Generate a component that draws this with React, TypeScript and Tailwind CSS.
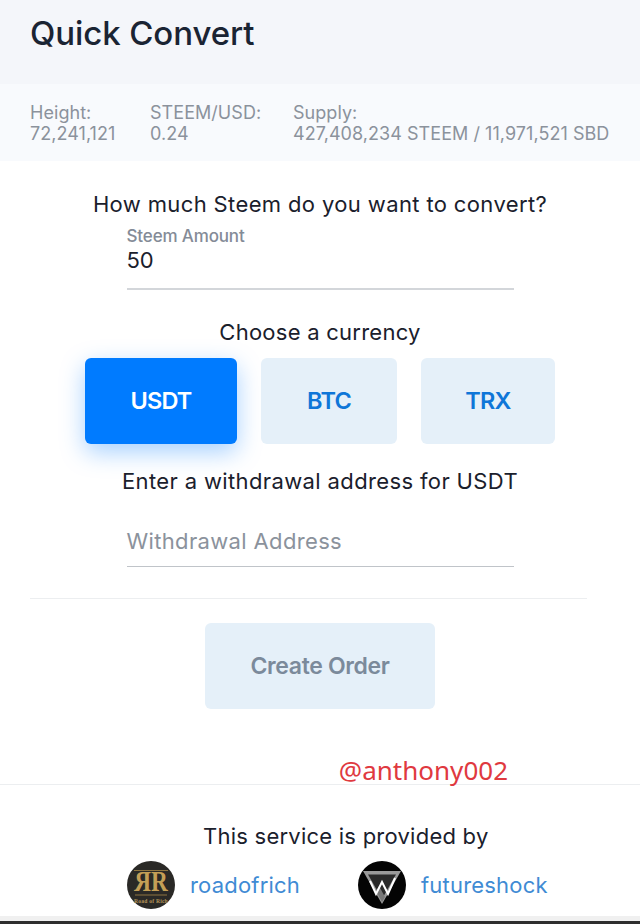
import React from 'react';

const stats = [
  { label: 'Height:', value: '72,241,121' },
  { label: 'STEEM/USD:', value: '0.24' },
  { label: 'Supply:', value: '427,408,234 STEEM / 11,971,521 SBD' },
];

const RoadOfRichLogo = () => (
  <svg viewBox="0 0 48 48" className="w-[48px] h-[48px] shrink-0">
    <circle cx="24" cy="24" r="24" fill="#2a2926" />
    <path d="M7 9.5H41" stroke="#8d7440" strokeWidth="1" />
    <text fontSize="29" fontWeight="700" fontFamily="Liberation Serif" fill="#c49f56" textAnchor="middle" transform="matrix(-0.8 0 0 1 15.5 30)">R</text>
    <text fontSize="29" fontWeight="700" fontFamily="Liberation Serif" fill="#c49f56" textAnchor="middle" transform="matrix(0.8 0 0 1 32.5 30)">R</text>
    <path d="M8 34H40" stroke="#8d7440" strokeWidth="1" />
    <text x="24" y="41.5" fontSize="5.6" fontWeight="700" fontFamily="Liberation Serif" fill="#b4945a" textAnchor="middle">Road of Rich</text>
  </svg>
);

const FutureshockLogo = () => (
  <svg viewBox="0 0 48 48" className="w-[48px] h-[48px] shrink-0">
    <circle cx="24" cy="24" r="24" fill="#040404" />
    <path d="M5 10H43L24 43Z" fill="#9a9a9a" />
    <path d="M10 13.5H38L24 38Z" fill="#2a2a2a" />
    <path d="M21 25L27 36L24 41L18 30Z" fill="#777777" />
    <path d="M12 20L18 33L24 21L30 33L37 17" fill="none" stroke="#ffffff" strokeWidth="2" />
  </svg>
);

const CurrencyButton = ({ label, active, className }: { label: string; active?: boolean; className: string }) => (
  <button
    className={`h-[86px] rounded-[6px] text-[23.5px] font-semibold tracking-[-0.8px] ${className} ${
      active
        ? 'bg-[#007bff] text-white shadow-[0_8px_24px_rgba(0,123,255,0.35)]'
        : 'bg-[#e5f0f9] text-[#0f76d8]'
    }`}
  >
    {label}
  </button>
);

export default function App() {
  return (
    <div className="relative w-[640px] h-[924px] overflow-hidden bg-white font-['Inter',sans-serif] text-[#1a202c]">
      {/* Title */}
      <div className="h-[84px] bg-[#f4f6fa] pl-[30px] pt-[12px]">
        <h1 className="text-[33px] leading-[42px] font-medium tracking-[-0.1px] text-[#1a2433]">Quick Convert</h1>
      </div>

      {/* Chain stats */}
      <div className="h-[77px] bg-[#f8fafd] pl-[30px] pt-[18px] flex text-[#8b929c] text-[18px] leading-[21px] tracking-[0.05px]">
        {stats.map((s, i) => (
          <div key={s.label} className={i === 0 ? 'w-[120px]' : i === 1 ? 'w-[143px]' : ''}>
            <div>{s.label}</div>
            <div>{s.value}</div>
          </div>
        ))}
      </div>

      {/* Form */}
      <div className="flex flex-col items-center pt-[30px]">
        <p className="text-[22px] leading-[27px] tracking-[0.37px]">How much Steem do you want to convert?</p>
        <div className="w-[387px] mt-[8px] h-[64px] border-b-2 border-[#d3d6da]">
          <div className="text-[17px] leading-[20px] font-medium text-[#848b97] tracking-[-0.15px]">Steem Amount</div>
          <div className="text-[22px] leading-[28px]">50</div>
        </div>

        <p className="text-[22px] leading-[27px] tracking-[0.25px] mt-[29px]">Choose a currency</p>
        <div className="flex gap-[24px] mt-[12px] w-[470px]">
          <CurrencyButton label="USDT" active className="w-[152px]" />
          <CurrencyButton label="BTC" className="w-[136px]" />
          <CurrencyButton label="TRX" className="w-[134px]" />
        </div>

        <p className="text-[22px] leading-[27px] tracking-[0.37px] mt-[24px]">Enter a withdrawal address for USDT</p>
        <div className="w-[387px] h-[60px] mt-[12px] border-b-[1.5px] border-[#c0c4c9] pt-[21px]">
          <div className="text-[22px] leading-[27px] tracking-[0.35px] text-[#8b929c]">Withdrawal Address</div>
        </div>

        <div className="w-[557px] h-px bg-[#eceef0] mt-[31px] self-start ml-[30px]" />
        <button className="w-[230px] h-[86px] mt-[24px] rounded-[6px] bg-[#e5f0f9] text-[#7b8a9b] text-[23px] font-semibold tracking-[-0.35px]">
          Create Order
        </button>
      </div>

      {/* Watermark */}
      <div className="flex justify-end pr-[132px] mt-[44px] h-[31px]">
        <span className="text-[26px] leading-[34px] text-[#e0393f] font-['Noto_Sans',sans-serif]">@anthony002</span>
      </div>

      {/* Providers */}
      <div className="border-t border-[#eceef0] flex flex-col pt-[38px]">
        <p className="text-[22px] leading-[27px] tracking-[0.24px] pl-[203px]">This service is provided by</p>
        <div className="flex items-center mt-[11px] text-[22px] tracking-[0.2px] text-[#3f8bd4] w-[640px] pl-[127px]">
          <RoadOfRichLogo />
          <span className="ml-[15px] w-[168px]">roadofrich</span>
          <FutureshockLogo />
          <span className="ml-[15px]">futureshock</span>
        </div>
      </div>

      {/* Bottom edge */}
      <div className="absolute bottom-0 left-0 right-0 h-[3px] bg-[#2e2e2e]" />
      <div className="absolute bottom-[3px] left-0 right-0 h-[5px] bg-[#f0f0f0]" />
    </div>
  );
}
